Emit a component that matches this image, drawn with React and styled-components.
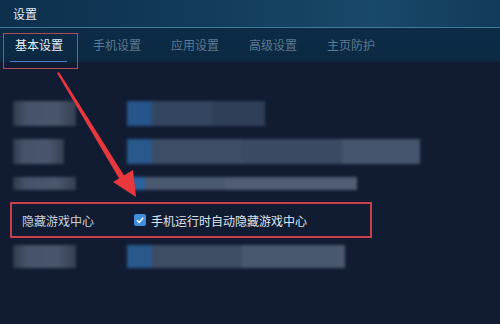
import React from 'react';
import styled, { createGlobalStyle } from 'styled-components';

const GlobalStyle = createGlobalStyle`
    body {
        margin: 0;
        background: #111c33;
        font-family: "Noto Sans CJK SC", "Noto Sans", sans-serif;
    }
`;

const tabs = ['基本设置', '手机设置', '应用设置', '高级设置', '主页防护'];

// blurred placeholder rows: label width, value segments
const rows = [
    { label: 63, top: 102, height: 25, value: [['#27548a', 25], ['#34455f', 60], ['#2f3f58', 53]] },
    { label: 51, top: 140, height: 25, value: [['#28588c', 25], ['#3d4d66', 90], ['#3a4a63', 100], ['#45556d', 78]] },
    { label: 63, top: 177, height: 13, value: [['#2a63a0', 18], ['#4a5870', 80], ['#505d74', 132]] },
];

const lastRow = { label: 63, height: 23, value: [['#29588b', 25], ['#3e4c64', 90], ['#4a586f', 103]] };

const Settings = () => {
    return (
        <Window>
            <TitleBar>设置</TitleBar>
            <TabBar>
                {tabs.map((t, i) => (
                    <Tab key={t} active={i === 0}>{t}</Tab>
                ))}
            </TabBar>
            <Content>
                {rows.map((r, i) => (
                    <Row key={i} height={r.height} gap={i === 0 ? 0 : 13}>
                        <LabelBlur width={r.label} />
                        <ValueBlur>
                            {r.value.map(([c, w], j) => (
                                <Seg key={j} color={c} width={w} />
                            ))}
                        </ValueBlur>
                    </Row>
                ))}
                <HighlightRow>
                    <Label>隐藏游戏中心</Label>
                    <CheckLabel>
                        <CheckBox>
                            <svg width="10" height="10" viewBox="0 0 10 10">
                                <path d="M2 5.2 L4.2 7.4 L8.2 2.8" fill="none" stroke="#fff" strokeWidth="1.6" />
                            </svg>
                        </CheckBox>
                        手机运行时自动隐藏游戏中心
                    </CheckLabel>
                </HighlightRow>
                <Row height={lastRow.height} gap={7}>
                    <LabelBlur width={lastRow.label} />
                    <ValueBlur>
                        {lastRow.value.map(([c, w], j) => (
                            <Seg key={j} color={c} width={w} />
                        ))}
                    </ValueBlur>
                </Row>
            </Content>
            <TabMark />
            <Arrow width="500" height="324" viewBox="0 0 500 324">
                <polygon points="57,73 59,72 125,177 120,180" fill="#e8383d" />
                <polygon points="113,182 133,170 136,197" fill="#e8383d" />
            </Arrow>
        </Window>
    );
};

const Window = styled.div`
    position: relative;
    width: 500px;
    height: 324px;
    overflow: hidden;
    background: #111c33;
`;

const TitleBar = styled.div`
    height: 28px;
    box-sizing: border-box;
    padding-left: 13px;
    display: flex;
    align-items: center;
    color: #e6edf3;
    font-size: 12px;
    background: linear-gradient(90deg, #0d2f4c 0%, #123b5b 40%, #18486a 75%, #123a5a 100%);
    border-bottom: 1px solid #3f7c9a;
`;

const TabBar = styled.div`
    height: 34px;
    display: flex;
    background: linear-gradient(180deg, #0b2b47 0%, #0b2a44 75%, #0f2540 100%);
`;

const Tab = styled.div`
    position: relative;
    width: 78px;
    display: flex;
    align-items: center;
    justify-content: center;
    padding-bottom: 2px;
    font-size: 12px;
    color: ${p => (p.active ? '#e8eef5' : '#5d7a92')};
    &::after {
        content: '';
        display: ${p => (p.active ? 'block' : 'none')};
        position: absolute;
        left: 10px;
        right: 11px;
        bottom: 0;
        height: 1px;
        background: #4a7ec8;
    }
`;

const TabMark = styled.div`
    position: absolute;
    left: 3px;
    top: 33px;
    width: 75px;
    height: 36px;
    box-sizing: border-box;
    border: 1px solid #b24a57;
`;

const Content = styled.div`
    padding: 39px 0 0 13px;
    display: flex;
    flex-direction: column;
`;

const Row = styled.div`
    display: flex;
    height: ${p => p.height}px;
    margin-top: ${p => p.gap}px;
`;

const LabelBlur = styled.div`
    width: ${p => p.width}px;
    margin-right: ${p => 114 - p.width}px;
    background: linear-gradient(90deg, #2e394c 0%, #46526a 20%, #4a566d 70%, #363f53 100%);
    filter: blur(1.5px);
`;

const ValueBlur = styled.div`
    display: flex;
    filter: blur(1.5px);
`;

const Seg = styled.div`
    width: ${p => p.width}px;
    background: ${p => p.color};
`;

const HighlightRow = styled.div`
    display: flex;
    align-items: center;
    margin: 12px 0 0 -3px;
    width: 362px;
    height: 36px;
    box-sizing: border-box;
    padding-left: 10px;
    border: 2px solid #c9404c;
`;

const Label = styled.div`
    width: 112px;
    font-size: 12px;
    color: #c8d2dc;
`;

const CheckLabel = styled.div`
    display: flex;
    align-items: center;
    gap: 5px;
    font-size: 12px;
    color: #dfe6ee;
`;

const CheckBox = styled.span`
    width: 12px;
    height: 12px;
    border-radius: 2px;
    background: #3f8fdc;
    display: flex;
    align-items: center;
    justify-content: center;
`;

const Arrow = styled.svg`
    position: absolute;
    left: 0;
    top: 0;
    pointer-events: none;
`;

export default function App() {
    return (
        <>
            <GlobalStyle />
            <Settings />
        </>
    );
}
